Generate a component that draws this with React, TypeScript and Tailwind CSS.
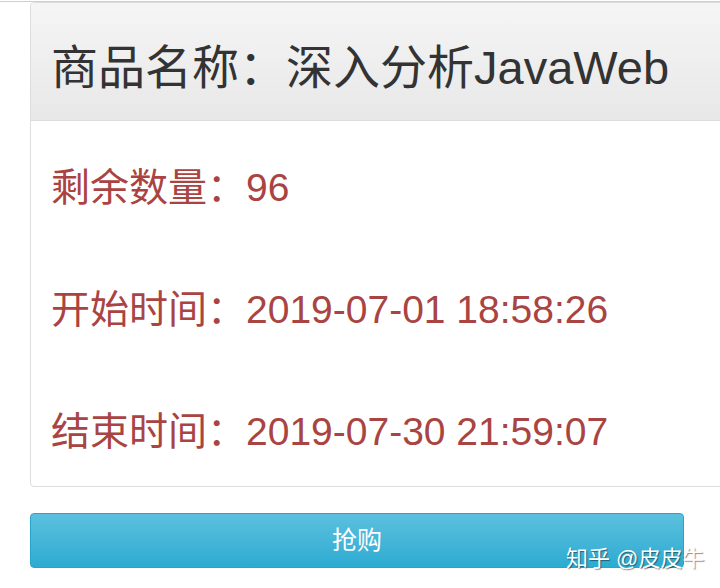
const FONT = "font-['Liberation_Sans','Noto_Sans_CJK_SC',sans-serif]";

function InfoRow({ label, value }: { label: string; value: string }) {
  return (
    <p className="text-[39px] leading-[44px] text-[#a94442] whitespace-nowrap">
      {label}：{value}
    </p>
  );
}

export default function App() {
  return (
    <div className={`${FONT} relative w-[720px] h-[588px] overflow-hidden bg-white`}>
      <div className="mt-px h-px w-full bg-[#cfcfcf]" />
      <div className="ml-[30px] w-[720px] rounded-[4px] border border-[#dddddd]">
        <div className="h-[118px] rounded-t-[4px] border-b border-[#dddddd] bg-gradient-to-b from-[#f5f5f5] to-[#e8e8e8] pl-[20px] pt-[39px]">
          <h3 className="text-[47px] leading-[52px] text-[#333333] whitespace-nowrap">
            商品名称：深入分析JavaWeb
          </h3>
        </div>
        <div className="flex flex-col gap-[78px] pl-[20px] pt-[45px] pb-[32px]">
          <InfoRow label="剩余数量" value="96" />
          <InfoRow label="开始时间" value="2019-07-01 18:58:26" />
          <InfoRow label="结束时间" value="2019-07-30 21:59:07" />
        </div>
      </div>
      <button className="ml-[30px] mt-[26px] flex h-[55px] w-[654px] items-center justify-center rounded-[4px] border border-[#28a4c9] bg-gradient-to-b from-[#5bc0de] to-[#2aabd2] text-[25px] text-white">
        抢购
      </button>
      <span className="absolute left-[566px] top-[545px] text-[22px] leading-[28px] text-white [text-shadow:1px_1px_1px_rgba(0,0,0,0.45)] whitespace-nowrap">
        知乎 @皮皮牛
      </span>
    </div>
  );
}
